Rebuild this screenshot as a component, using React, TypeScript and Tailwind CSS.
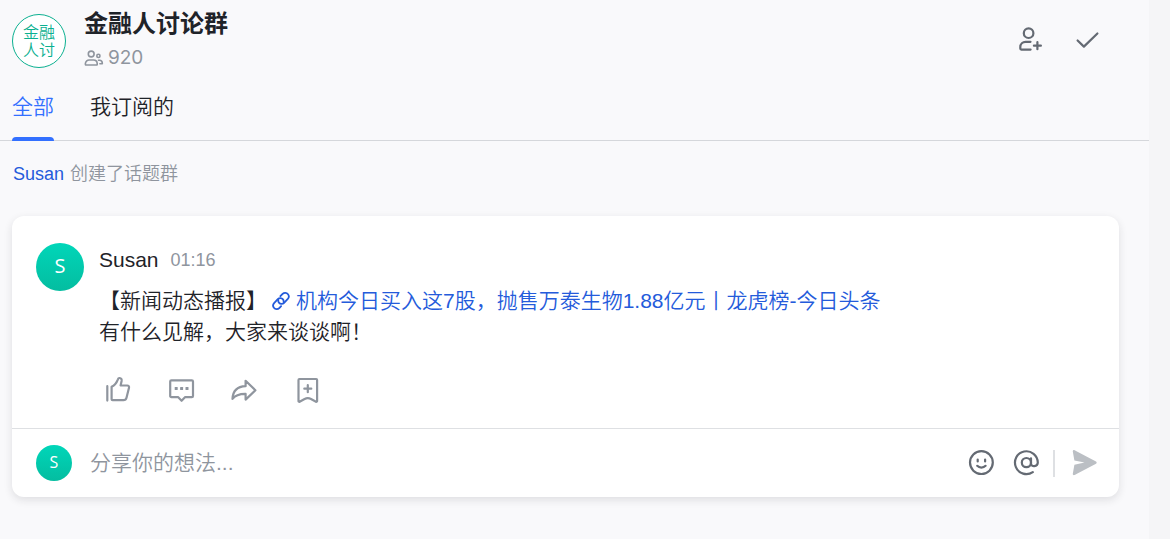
import type { ReactNode } from "react";

const textFont =
	"font-['Liberation_Sans','Noto_Sans_CJK_SC',sans-serif] font-[350]";

interface IconProps {
	className?: string;
	viewBox?: string;
	children: ReactNode;
}

function Icon({
	className = "size-7",
	viewBox = "0 0 28 28",
	children,
}: IconProps) {
	return (
		<svg
			viewBox={viewBox}
			className={className}
			fill="none"
			stroke="currentColor"
			strokeWidth="2.2"
			strokeLinecap="round"
			strokeLinejoin="round"
			aria-hidden="true"
		>
			{children}
		</svg>
	);
}

const MembersIcon = () => (
	<Icon className="h-5 w-5" viewBox="0 0 20 20">
		<g strokeWidth="1.6">
			<circle cx="7.2" cy="6" r="2.9" />
			<path d="M5.5 12h4a3.7 3.7 0 0 1 3.7 3.4v1a.6.6 0 0 1-.6.6H2a.6.6 0 0 1-.6-.6v-1A3.7 3.7 0 0 1 5.5 12z" />
			<circle cx="14.4" cy="7.9" r="1.6" />
			<path d="M14.5 12.2h1a2.9 2.9 0 0 1 2.8 2.8v.8h-2.4" />
		</g>
	</Icon>
);

const AddMemberIcon = () => (
	<Icon>
		<circle cx="12.6" cy="7.2" r="4.8" />
		<path d="M14.5 15.8H9.6A5.3 5.3 0 0 0 4.3 21v1.6c0 .6.4 1 1 1h9.3M21.4 16.2v7M17.9 19.7h7" />
	</Icon>
);

const CheckIcon = () => (
	<Icon>
		<path d="m3.6 14.5 6.3 6.1L23.4 7.5" />
	</Icon>
);

const LinkIcon = () => (
	<Icon className="size-5 shrink-0" viewBox="0 0 20 20">
		<g strokeWidth="1.8">
			<path d="m9.4 5.2 2.2-2.3a3.6 3.6 0 0 1 5.4.3 3.7 3.7 0 0 1-.2 4.7l-3.7 3.9a3.4 3.4 0 0 1-5.2-.2c-.6-.8-.8-1.7-.6-2.6" />
			<path d="m10.1 15.2-1.8 1.9a3.6 3.6 0 0 1-5.4-.3 3.7 3.7 0 0 1 .2-4.7l3.7-3.9a3.4 3.4 0 0 1 5.2.2c.6.8.8 1.7.6 2.6" />
		</g>
	</Icon>
);

const LikeIcon = () => (
	<Icon>
		<path d="M3.3 10.2v14.4M7.6 10.8c2.8-1.4 5-4 6.2-7.2.4-1.3 1-1.7 1.8-1.6 1.6.2 2.3 1.3 2 2.9l-1 4.6h6.6c1.4 0 2.1.9 1.8 2.2l-2.5 10c-.4 1.6-1.4 2.5-3 2.5H8.6c-.6 0-1-.4-1-1z" />
	</Icon>
);

const CommentIcon = () => (
	<Icon>
		<path d="M4.4 4.4h20.4c.7 0 1.2.5 1.2 1.2v14.3c0 .7-.5 1.2-1.2 1.2h-6.6l-3.6 3.7-3.6-3.7H4.4c-.7 0-1.2-.5-1.2-1.2V5.6c0-.7.5-1.2 1.2-1.2z" />
		<g fill="currentColor" stroke="none">
			<rect x="7.7" y="11" width="3" height="3" rx=".5" />
			<rect x="13.1" y="11" width="3" height="3" rx=".5" />
			<rect x="18.5" y="11" width="3" height="3" rx=".5" />
		</g>
	</Icon>
);

const ShareIcon = () => (
	<Icon>
		<path d="M15.6 4.8v5.4C7.5 10.5 2.9 15 2.5 22.9c3-4 7-5.2 13.1-5.1v5.8l9.8-9.3z" />
	</Icon>
);

const BookmarkIcon = () => (
	<Icon>
		<path d="M6.4 3h16.8c.5 0 .9.4.9.9v21.1c0 .6-.6 1-1.1.7l-5-2.7c-2-1-4.4-1-6.4 0l-5 2.7c-.6.3-1.1-.1-1.1-.7V3.9c0-.5.4-.9.9-.9zM14.8 9.2v7M11.3 12.7h7" />
	</Icon>
);

const SmileIcon = () => (
	<Icon>
		<circle cx="14.4" cy="13.6" r="11.4" />
		<path d="M10.7 10.6v1.8M18.1 10.6v1.8M10.2 16.8c2.3 2.4 6.1 2.4 8.4 0" />
	</Icon>
);

const MentionIcon = () => (
	<Icon>
		<circle cx="14.4" cy="13.6" r="4.6" />
		<path d="M19 9.3v5.2c0 3.8 6.8 3.4 6.8-.9A11.4 11.4 0 1 0 20.8 23.1" />
	</Icon>
);

const SendIcon = () => (
	<svg viewBox="0 0 28 28" className="size-7" fill="currentColor" aria-hidden="true">
		<path d="M2.8 2.5c-.2-1.1.8-1.8 1.8-1.3L26 12.5c.9.5.9 1.7 0 2.2L4.6 26c-1 .5-2-.2-1.8-1.3l1.6-8.9 10.1-2.2-10.1-2.2z" />
	</svg>
);

function IconButton({
	label,
	className = "",
	children,
}: { label: string; className?: string; children: ReactNode }) {
	return (
		<button type="button" aria-label={label} className={`shrink-0 ${className}`}>
			{children}
		</button>
	);
}

function UserAvatar({ className }: { className: string }) {
	return (
		<div
			className={`flex shrink-0 items-center justify-center rounded-full bg-linear-to-b from-[#00d6b9] to-[#04bda0] pb-0.5 font-['Open_Sans',sans-serif] font-medium text-white ${className}`}
		>
			S
		</div>
	);
}

function GroupHeader() {
	return (
		<header className="flex items-start pt-2 pr-[47px] pl-3">
			<div className="mt-1.5 flex size-[54px] shrink-0 items-center justify-center rounded-full border border-[#0bb090] bg-white pt-0.5 text-center text-base leading-[18px] text-[#0bb090]">
				金融
				<br />
				人讨
			</div>
			<div className="ml-[18px] min-w-0 flex-1">
				<h1 className="text-2xl leading-8 font-bold">金融人讨论群</h1>
				<div className="flex h-9 items-center gap-1 font-['Inter',sans-serif] text-[19px] font-normal text-[#8f959e]">
					<MembersIcon />
					920
				</div>
			</div>
			<div className="mt-[18px] flex gap-[30px] text-[#646a73]">
				<IconButton label="添加成员">
					<AddMemberIcon />
				</IconButton>
				<IconButton label="完成">
					<CheckIcon />
				</IconButton>
			</div>
		</header>
	);
}

function Tabs() {
	return (
		<nav className="flex gap-9 border-b border-[#d5d7db] px-3 text-[21px] leading-8">
			<button type="button" className="relative h-16 pb-0.5 text-[#3370ff]">
				全部
				<span className="absolute inset-x-0 -bottom-px h-1 rounded-t-sm bg-[#3370ff]" />
			</button>
			<button type="button" className="h-16 pb-0.5">
				我订阅的
			</button>
		</nav>
	);
}

function TopicCard() {
	return (
		<article className="rounded-xl bg-white shadow-[0_3px_8px_rgba(31,35,41,0.12)]">
			<div className="flex gap-[15px] px-6 pt-[27px] pb-6">
				<UserAvatar className="size-12 text-xl" />
				<div className="mt-px min-w-0 flex-1">
					<div className="flex items-center gap-3 leading-8">
						<span className="text-[21px]">Susan</span>
						<time className="text-lg leading-8 text-[#8f959e]">01:16</time>
					</div>
					<div className="mt-[9px] text-[21px] leading-[31px]">
						<p className="flex items-center">
							<span className="shrink-0">【新闻动态播报】</span>
							<a href="#news" className="ml-1 flex min-w-0 items-center gap-[5px] text-[#245bdb]">
								<LinkIcon />
								机构今日买入这7股，抛售万泰生物1.88亿元丨龙虎榜-今日头条
							</a>
						</p>
						<p>有什么见解，大家来谈谈啊！</p>
					</div>
					<div className="mt-[29px] ml-[5px] flex gap-[35px] text-[#8f959e]">
						<IconButton label="点赞">
							<LikeIcon />
						</IconButton>
						<IconButton label="评论">
							<CommentIcon />
						</IconButton>
						<IconButton label="转发">
							<ShareIcon />
						</IconButton>
						<IconButton label="收藏">
							<BookmarkIcon />
						</IconButton>
					</div>
				</div>
			</div>
			<form className="flex h-[69px] items-center border-t border-[#dee0e3] pr-[21px] pl-6 text-[#646a73]">
				<UserAvatar className="size-9 text-base" />
				<input
					type="text"
					aria-label="分享你的想法"
					placeholder="分享你的想法..."
					className="ml-[18px] h-8 min-w-0 flex-1 text-[21px] outline-none placeholder:text-[#8f959e]"
				/>
				<IconButton label="表情">
					<SmileIcon />
				</IconButton>
				<IconButton label="提及" className="ml-[17px]">
					<MentionIcon />
				</IconButton>
				<span className="ml-[13px] h-[27px] w-0.5 bg-[#dee0e3]" />
				<IconButton label="发送" className="ml-[15px] text-[#bbbfc4]">
					<SendIcon />
				</IconButton>
			</form>
		</article>
	);
}

export default function App() {
	return (
		<div className={`flex min-h-screen bg-[#f5f5f7] text-[#1f2329] ${textFont}`}>
			<main className="mr-[21px] min-w-0 flex-1 bg-[#f9f9fb]">
				<GroupHeader />
				<Tabs />
				<p className="mt-[17px] flex gap-1.5 px-[13px] text-lg leading-8 text-[#8f959e]">
					<a href="#susan" className="text-[#245bdb]">
						Susan
					</a>
					创建了话题群
				</p>
				<div className="mt-[26px] mr-[30px] ml-3">
					<TopicCard />
				</div>
			</main>
		</div>
	);
}
